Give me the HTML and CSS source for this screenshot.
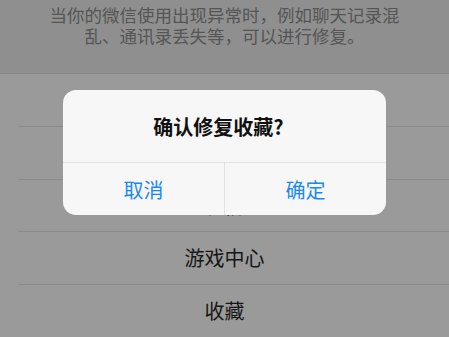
FILE: index.html
```html
<!DOCTYPE html>
<html>
	<head>
		<meta charset="UTF-8">
		<title>修复</title>
		<link rel="stylesheet" href="styles.css">
	</head>
	<body>
		<div class="page">
			<div class="tip">
				<p>当你的微信使用出现异常时，例如聊天记录混乱、通讯录丢失等，可以进行修复。</p>
			</div>
			<div class="list">
				<div class="row">聊天记录</div>
				<div class="row">通讯录</div>
				<div class="row">表情</div>
				<div class="row">游戏中心</div>
				<div class="row">收藏</div>
			</div>
		</div>
		<!-- 弹窗 -->
		<div class="dialog">
			<div class="dialog-title">确认修复收藏?</div>
			<div class="dialog-btns">
				<div class="btn">取消</div>
				<div class="btn">确定</div>
			</div>
		</div>
	</body>
</html>
```

FILE: styles.css
```css
body{
	margin: 0;
	padding: 0;
	background: #9a9a9a;
	font-family: "Noto Sans CJK SC", "Noto Sans", sans-serif;
}
.page{
	width: 449px;
	height: 337px;
	overflow: hidden;
}
.tip{
	background: #8f8f8f;
	border-bottom: 1px solid #868686;
	box-sizing: border-box;
	height: 74px;
	padding-top: 4px;
}
.tip p{
	margin: 0 auto;
	width: 352px;
	font-size: 17.5px;
	line-height: 21px;
	color: #555;
	text-align: center;
}
.row{
	height: 53px;
	display: flex;
	align-items: center;
	justify-content: center;
	font-size: 20px;
	color: #161616;
	background: linear-gradient(#8b8b8b, #8b8b8b) no-repeat 18px 100% / calc(100% - 18px) 1px;
	box-sizing: border-box;
	padding-bottom: 2px;
}
.row:nth-child(3){
	height: 52px;
}
.dialog{
	position: absolute;
	left: 63px;
	top: 90px;
	width: 323px;
	height: 125px;
	background: #f7f7f7;
	border-radius: 13px;
	overflow: hidden;
	display: flex;
	flex-direction: column;
}
.dialog-title{
	display: flex;
	align-items: center;
	justify-content: center;
	padding-right: 12px;
	font-size: 20px;
	font-weight: bold;
	color: #111;
	border-bottom: 1px solid #e2e2e2;
	box-sizing: border-box;
	height: 73px;
}
.dialog-btns{
	flex: 1;
	display: flex;
}
.btn{
	flex: 1;
	display: flex;
	align-items: center;
	justify-content: center;
	font-size: 20px;
	color: #1a88f2;
}
.btn + .btn{
	border-left: 1px solid #e2e2e2;
}
```
